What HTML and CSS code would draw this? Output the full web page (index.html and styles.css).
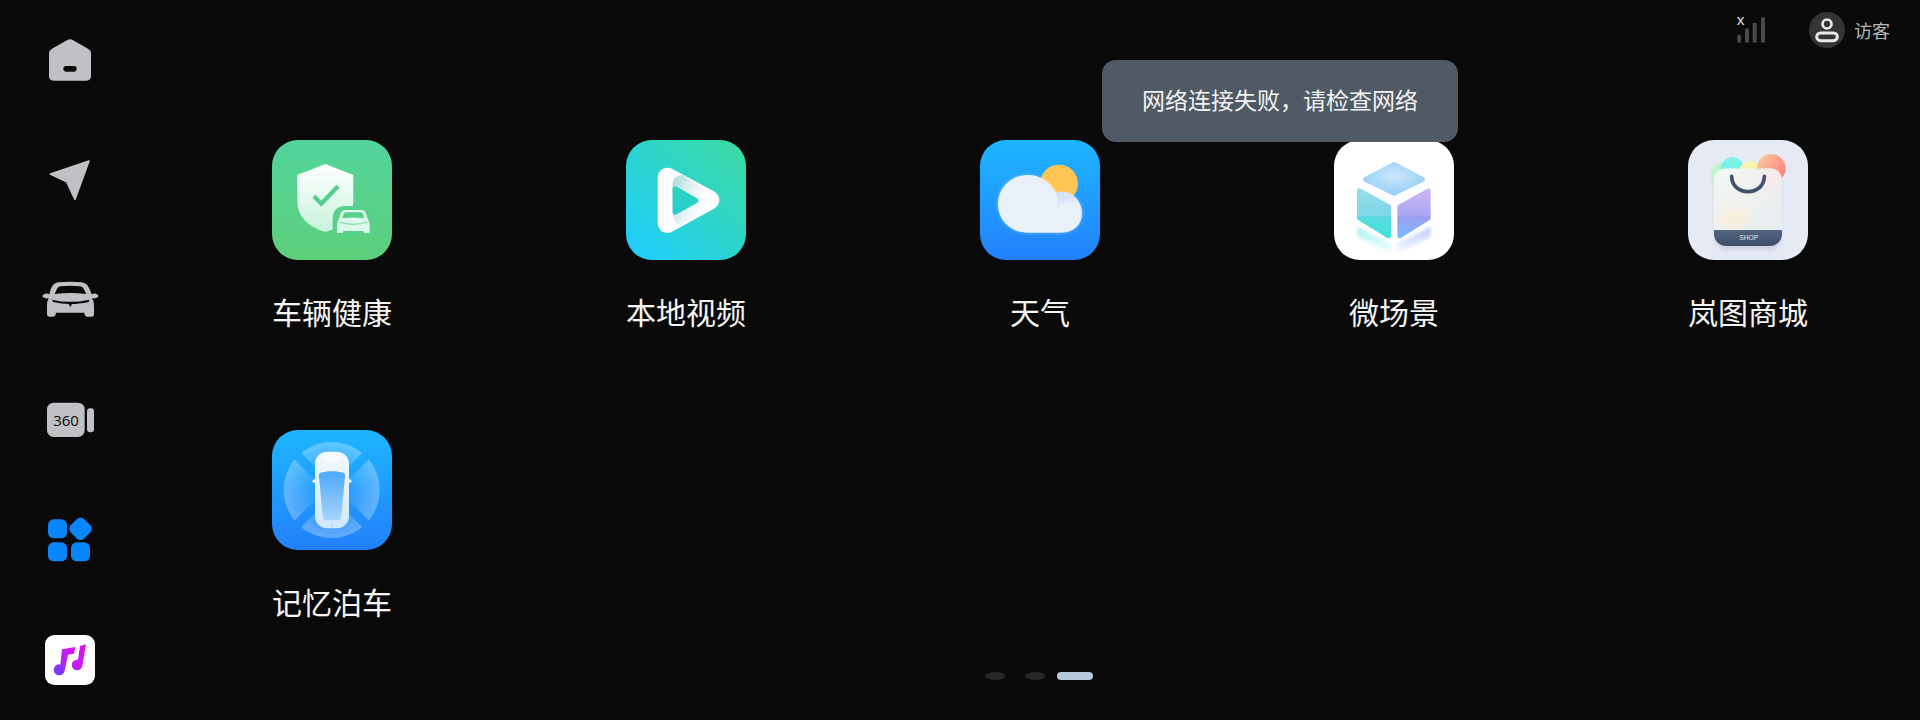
FILE: index.html
```html
<!DOCTYPE html>
<html lang="zh">
<head>
<meta charset="utf-8">
<title>应用</title>
<link rel="stylesheet" href="styles.css">
</head>
<body>
<div class="screen">
  <nav class="sidebar">
    <div class="nav-item"><svg class="nav-icon" viewBox="120 90 180 180"><path class="g" d="M202 120 Q210 115 218 120 L264 146 Q273 151 273 160 V228 Q273 242 259 242 H161 Q147 242 147 228 V160 Q147 151 156 146Z"/><rect class="k" x="190" y="198" width="40" height="17" rx="8.5"/></svg></div>
    <div class="nav-item"><svg class="nav-icon" viewBox="120 450 180 180"><path class="g gr" d="M267 483 L151 522 L200 545 L225 598Z"/></svg></div>
    <div class="nav-item"><svg class="nav-icon" viewBox="120 810 180 180"><path class="g" d="M175 847 Q210 843 245 847 Q262 849 269 868 L275 883 Q285 878 293 884 Q298 888 293 892 Q285 897 276 894 Q283 905 282 920 V942 Q282 950 274 950 H262 Q254 950 253 938 H168 Q167 950 159 950 H149 Q141 950 141 942 V920 Q140 905 146 894 Q137 897 130 892 Q124 888 130 884 Q138 878 148 883 L152 868 Q159 849 175 847Z"/><path class="k" d="M164 882 L171 866 Q174 860 182 859 Q210 856 240 859 Q248 860 251 866 L259 882 Q210 876 164 882Z"/><path class="k" d="M156 899 Q210 912 268 899 L266 906 Q235 912 216 912 L211 921 L206 912 Q185 912 159 906Z"/></svg></div>
    <div class="nav-item"><svg class="nav-icon" viewBox="120 90 180 180"><rect class="g" x="141" y="128" width="113" height="103" rx="20"/><rect class="g" x="261" y="145" width="21" height="72" rx="9"/><text class="cam-text" x="198" y="197" text-anchor="middle">360</text></svg></div>
    <div class="nav-item"><svg class="nav-icon" viewBox="120 450 180 180"><rect class="b" x="144" y="478" width="57" height="57" rx="17"/><rect class="b" x="144" y="547" width="57" height="57" rx="17"/><rect class="b" x="213" y="547" width="57" height="57" rx="17"/><rect class="b" x="213" y="478" width="57" height="57" rx="16" transform="rotate(45 241.500 506.500)"/></svg></div>
    <div class="nav-item"><svg class="nav-icon" viewBox="120 810 180 180"><defs><linearGradient id="mu" gradientUnits="userSpaceOnUse" x1="165" y1="945" x2="255" y2="860"><stop offset="0" stop-color="#6b3ffb"/><stop offset=".55" stop-color="#c81cf5"/><stop offset="1" stop-color="#e30ff0"/></linearGradient></defs><rect fill="#fff" x="135" y="825" width="150" height="150" rx="28"/><path fill="url(#mu)" d="M186 868 L226 861 L222 881 L204 884 L194 932 A16.500 16.500 0 1 1 178 913 Q180 913 181 914Z"/><path fill="url(#mu)" d="M240 858 L258 853 L247 918 A16 16 0 1 1 231 899 Q233 899 234 900Z"/></svg></div>
  </nav>

  <main class="main">
    <header class="topbar">
      <svg class="signal" viewBox="75 30 96 108"><rect class="bar" x="82" y="105" width="11" height="23" rx="4"/><rect class="bar" x="105" y="85" width="12" height="43" rx="4"/><rect class="bar" x="128" y="68" width="12" height="60" rx="4"/><rect class="bar" x="153" y="52" width="12" height="76" rx="4"/><text class="signal-x" x="92" y="75" text-anchor="middle">x</text></svg>
      <div class="user">
        <svg class="avatar" viewBox="297 36 108 108"><circle cx="351" cy="90" r="54" fill="#343436"/><circle cx="351" cy="72" r="13.500" fill="none" stroke="#e8e8e8" stroke-width="8"/><rect x="320" y="99" width="62" height="23" rx="11.500" fill="none" stroke="#e8e8e8" stroke-width="9"/></svg>
        <span class="user-name">访客</span>
      </div>
    </header>

    <section class="apps">
      <div class="app">
        <svg class="app-icon" viewBox="68 60 360 360">
          <defs>
            <linearGradient id="a1" x1="0" y1="0" x2="0" y2="1"><stop offset="0" stop-color="#52d49c"/><stop offset="1" stop-color="#5dcf7b"/></linearGradient>
            <linearGradient id="a1s" x1="0" y1="0" x2="0" y2="1"><stop offset="0" stop-color="#ffffff"/><stop offset="1" stop-color="#c8f3dd"/></linearGradient>
          </defs>
          <rect fill="url(#a1)" x="68" y="60" width="360" height="360" rx="78"/>
          <path fill="url(#a1s)" d="M228 132 L312 165 V245 Q310 310 228 336 Q145 310 144 245 V165Z"/>
          <path fill="none" stroke="#52cf8e" stroke-width="13" d="M194 229 L216 251 L266 199"/>
          <path fill="#57d18a" d="M250 345 V295 Q252 258 290 258 H330 Q368 258 371 295 V345Z"/>
          <path fill="#dcf8ea" d="M285 270 H338 Q348 271 351 283 L355 296 Q361 304 361 318 V339 H344 L342 333 H282 L280 339 H263 V318 Q263 304 269 296 L273 283 Q276 271 285 270Z"/>
          <path fill="#57d18a" d="M279 295 L283 282 Q285 277 291 277 H333 Q339 277 341 282 L345 295 Q312 290 279 295Z"/>
          <path fill="none" stroke="#57d18a" stroke-width="2.500" d="M270 306 Q312 320 354 306"/>
        </svg>
        <span class="app-name">车辆健康</span>
      </div>
      <div class="app">
        <svg class="app-icon" viewBox="48 60 360 360">
          <defs>
            <linearGradient id="a2" x1="1" y1="0" x2="0" y2="1"><stop offset="0" stop-color="#3cdc9f"/><stop offset="1" stop-color="#1dcdff"/></linearGradient>
            <linearGradient id="a2r" x1="0" y1="0" x2="1" y2=".5"><stop offset="0" stop-color="#a8d8dd"/><stop offset=".6" stop-color="#e8f3f4"/><stop offset="1" stop-color="#ffffff"/></linearGradient>
            <linearGradient id="a2i" x1="0" y1="0" x2="0" y2="1"><stop offset="0" stop-color="#2bd2bd"/><stop offset="1" stop-color="#25d0cc"/></linearGradient>
          </defs>
          <rect fill="url(#a2)" x="48" y="60" width="360" height="360" rx="78"/>
          <path fill="#fff" stroke="#fff" stroke-width="58" stroke-linejoin="round" d="M172 172 V310 L299 240Z"/>
          <path fill="url(#a2r)" d="M187 195 Q190 165 218 165 L280 205 Q292 225 288 252 Q284 275 262 284 L210 316 Q190 308 187 280Z"/>
          <path fill="url(#a2i)" stroke="url(#a2i)" stroke-width="16" stroke-linejoin="round" d="M196 207 V276 L257 242Z"/>
        </svg>
        <span class="app-name">本地视频</span>
      </div>
      <div class="app">
        <svg class="app-icon" viewBox="60 60 360 360">
          <defs>
            <linearGradient id="a3" x1="0" y1="0" x2="0" y2="1"><stop offset="0" stop-color="#1db6ff"/><stop offset="1" stop-color="#2280fb"/></linearGradient>
            <linearGradient id="a3n" x1="0" y1="0" x2="1" y2="1"><stop offset="0" stop-color="#cfdff5"/><stop offset="1" stop-color="#e8f0fa"/></linearGradient>
            <filter id="a3b" x="-20%" y="-20%" width="140%" height="140%"><feGaussianBlur stdDeviation="6"/></filter>
          </defs>
          <rect fill="url(#a3)" x="60" y="60" width="360" height="360" rx="78"/>
          <circle fill="#ffc552" cx="297" cy="191" r="57"/>
          <path fill="#fff" opacity=".35" filter="url(#a3b)" d="M205 165 C150 165 114 205 114 252 C114 300 150 338 205 338 H305 C340 338 366 315 366 280 C366 245 340 220 305 220 Q298 220 288 222 C270 185 240 165 205 165Z"/>
          <path fill="#e8f0fa" d="M205 165 C150 165 114 205 114 252 C114 300 150 338 205 338 H305 C340 338 366 315 366 280 C366 245 340 215 305 215 Q298 215 288 218 C270 185 240 165 205 165Z"/>
          <path fill="url(#a3n)" d="M288 218 Q298 215 305 215 Q340 215 358 250 Q320 235 293 262 Q296 240 288 218Z"/>
        </svg>
        <span class="app-name">天气</span>
      </div>
      <div class="app">
        <svg class="app-icon" viewBox="42 30 360 360">
          <defs>
            <radialGradient id="a4t" cx=".5" cy=".4" r=".6"><stop offset="0" stop-color="#cae6fb"/><stop offset="1" stop-color="#98d1f8"/></radialGradient>
            <linearGradient id="a4l" x1="0" y1="0" x2="0" y2="1"><stop offset="0" stop-color="#94dcea"/><stop offset=".55" stop-color="#7cd9e6"/><stop offset=".56" stop-color="#5dd9e2"/><stop offset="1" stop-color="#44e3da"/></linearGradient>
            <linearGradient id="a4r" x1="0" y1="0" x2="0" y2="1"><stop offset="0" stop-color="#ccb6f3"/><stop offset=".55" stop-color="#a9a7f2"/><stop offset=".56" stop-color="#9c9ff0"/><stop offset="1" stop-color="#7db6f9"/></linearGradient>
            <linearGradient id="a4c" x1="0" y1="0" x2="0" y2="1"><stop offset="0" stop-color="#a8f0f4"/><stop offset="1" stop-color="#ffffff"/></linearGradient>
            <linearGradient id="a4d" x1="0" y1="0" x2="0" y2="1"><stop offset="0" stop-color="#bcccff"/><stop offset="1" stop-color="#ffffff"/></linearGradient>
            <filter id="a4b" x="-20%" y="-20%" width="140%" height="140%"><feGaussianBlur stdDeviation="5"/></filter>
          </defs>
          <rect fill="#fff" x="42" y="30" width="360" height="360" rx="78"/>
          <path fill="url(#a4c)" filter="url(#a4b)" d="M112 290 L212 340 V375 L112 320Z"/>
          <path fill="url(#a4d)" filter="url(#a4b)" d="M332 290 L232 340 V375 L332 320Z"/>
          <path fill="url(#a4t)" stroke="url(#a4t)" stroke-width="14" stroke-linejoin="round" d="M222 103 L308 148 L222 190 L136 148Z"/>
          <path fill="url(#a4l)" stroke="url(#a4l)" stroke-width="14" stroke-linejoin="round" d="M118 182 L206 230 V318 L118 264Z"/>
          <path fill="url(#a4r)" stroke="url(#a4r)" stroke-width="14" stroke-linejoin="round" d="M325 182 L239 230 V318 L325 264Z"/>
        </svg>
        <span class="app-name">微场景</span>
      </div>
      <div class="app">
        <svg class="app-icon" viewBox="54 30 360 360">
          <defs>
            <linearGradient id="a5o" x1="0" y1="0" x2="1" y2=".6"><stop offset="0" stop-color="#fdd09c"/><stop offset="1" stop-color="#ff8583"/></linearGradient>
            <linearGradient id="a5b" x1="0" y1="0" x2="1" y2="1"><stop offset="0" stop-color="#f3f8f6"/><stop offset=".45" stop-color="#eff0ee"/><stop offset="1" stop-color="#e2edf2"/></linearGradient>
            <linearGradient id="a5d" x1="0" y1="0" x2="0" y2="1"><stop offset="0" stop-color="#54637f"/><stop offset="1" stop-color="#3e4d68"/></linearGradient>
            <radialGradient id="a5y" cx=".5" cy=".5" r=".5"><stop offset="0" stop-color="#f9ecd8"/><stop offset="1" stop-color="#f9ecd8" stop-opacity="0"/></radialGradient>
            <radialGradient id="a5p" cx=".5" cy=".5" r=".5"><stop offset="0" stop-color="#f8e9ea"/><stop offset="1" stop-color="#f8e9ea" stop-opacity="0"/></radialGradient>
            <filter id="a5s" x="-20%" y="-20%" width="140%" height="140%"><feGaussianBlur stdDeviation="8"/></filter>
            <clipPath id="a5c"><rect x="132" y="115" width="204" height="233" rx="36"/></clipPath>
          </defs>
          <rect fill="#e6eaf4" x="54" y="30" width="360" height="360" rx="78"/>
          <circle fill="#c5f6cb" cx="158" cy="135" r="37"/>
          <circle fill="#7bf0e7" cx="187" cy="118" r="36"/>
          <circle fill="#fbf3b0" cx="241" cy="130" r="36"/>
          <circle fill="url(#a5o)" cx="304" cy="115" r="43"/>
          <rect fill="#aeb9d4" opacity=".5" filter="url(#a5s)" x="136" y="125" width="196" height="235" rx="36"/>
          <g clip-path="url(#a5c)">
            <rect fill="url(#a5b)" x="132" y="115" width="204" height="233"/>
            <ellipse fill="url(#a5y)" cx="190" cy="265" rx="70" ry="45"/>
            <ellipse fill="url(#a5p)" cx="300" cy="150" rx="50" ry="50"/>
            <rect fill="url(#a5d)" x="132" y="300" width="204" height="48"/>
          </g>
          <path fill="none" stroke="#43516c" stroke-width="11" stroke-linecap="round" d="M185 139 C185 200 283 200 283 139"/>
          <text class="shop" x="236" y="329" text-anchor="middle">SHOP</text>
        </svg>
        <span class="app-name">岚图商城</span>
      </div>
      <div class="app">
        <svg class="app-icon" viewBox="66 30 360 360">
          <defs>
            <linearGradient id="a6" x1="0" y1="0" x2="0" y2="1"><stop offset="0" stop-color="#1db6ff"/><stop offset="1" stop-color="#2280fb"/></linearGradient>
            <radialGradient id="a6r" gradientUnits="userSpaceOnUse" cx="245" cy="210" r="144"><stop offset=".4" stop-color="#fff" stop-opacity=".05"/><stop offset="1" stop-color="#fff" stop-opacity=".3"/></radialGradient>
            <linearGradient id="a6c" x1="0" y1="0" x2="0" y2="1"><stop offset="0" stop-color="#4ea9fb"/><stop offset="1" stop-color="#a8d3fb"/></linearGradient>
            <linearGradient id="a6w" x1="0" y1="0" x2="0" y2="1"><stop offset="0" stop-color="#f2f9ff"/><stop offset="1" stop-color="#cfe8fd"/></linearGradient>
            <mask id="a6m"><rect fill="#fff" x="66" y="30" width="360" height="360"/><path stroke="#000" stroke-width="28" d="M125 90 L365 330 M365 90 L125 330"/></mask>
          </defs>
          <rect fill="url(#a6)" x="66" y="30" width="360" height="360" rx="78"/>
          <circle fill="url(#a6r)" mask="url(#a6m)" cx="245" cy="210" r="144"/>
          <path fill="#e2f2ff" d="M204 168 L186 183 Q186 189 194 188 H204Z M288 168 L306 183 Q306 189 298 188 H288Z"/>
          <rect fill="url(#a6w)" x="195" y="95" width="102" height="230" rx="36"/>
          <path fill="url(#a6c)" d="M212 158 Q246 150 280 158 Q287 160 285 170 L274 287 Q273 300 262 301 H230 Q219 300 218 287 L207 170 Q205 160 212 158Z"/>
          <path fill="#fff" opacity=".55" d="M226 101 H266 L272 128 Q246 122 220 128Z"/>
          <path fill="none" stroke="#9fcdfa" stroke-width="2" d="M246 308 V324"/>
        </svg>
        <span class="app-name">记忆泊车</span>
      </div>
    </section>

    <div class="pager">
      <span class="dot"></span>
      <span class="dot"></span>
      <span class="dot dot-active"></span>
    </div>
  </main>

  <div class="toast">网络连接失败，请检查网络</div>
</div>
</body>
</html>
```
FILE: styles.css
```css
* { box-sizing: border-box; }

html, body {
  margin: 0;
  padding: 0;
  background: #0a0a0b;
}

.screen {
  position: relative;
  display: flex;
  width: 1920px;
  height: 720px;
  overflow: hidden;
  background: #0a0a0b;
  font-family: "Noto Sans CJK SC", "Noto Sans", sans-serif;
}

.sidebar {
  flex: 0 0 140px;
  display: flex;
  flex-direction: column;
}

.nav-item {
  flex: 0 0 120px;
  display: flex;
  align-items: center;
  justify-content: center;
}

.nav-icon {
  display: block;
  width: 60px;
  height: 60px;
}

.g { fill: #c0c1c5; }
.gr { stroke: #c0c1c5; stroke-width: 5; stroke-linejoin: round; }
.k { fill: #0a0a0b; }
.b { fill: #0a86fb; }

.cam-text {
  font-family: "Open Sans", sans-serif;
  font-size: 45px;
  font-weight: 500;
  fill: #0a0a0b;
}

.main {
  flex: 1;
  display: flex;
  flex-direction: column;
}

.topbar {
  flex: 0 0 60px;
  display: flex;
  align-items: center;
  justify-content: flex-end;
  padding-right: 30px;
  gap: 42px;
}

.signal {
  display: block;
  width: 32px;
  height: 36px;
  margin-bottom: 4px;
}

.bar { fill: #4a4a4c; }

.signal-x {
  font-family: "Liberation Sans", sans-serif;
  font-size: 46px;
  fill: #e0e0e0;
}

.user {
  display: flex;
  align-items: center;
  gap: 9px;
}

.avatar {
  display: block;
  width: 36px;
  height: 36px;
}

.user-name {
  font-size: 18px;
  line-height: 24px;
  color: #b9b9b9;
}

.apps {
  display: grid;
  grid-template-columns: repeat(5, 120px);
  column-gap: 234px;
  row-gap: 99px;
  padding: 80px 0 0 132px;
}

.app {
  display: flex;
  flex-direction: column;
  align-items: center;
  gap: 31px;
}

.app-icon {
  display: block;
  width: 120px;
  height: 120px;
}

.app-name {
  font-size: 30px;
  line-height: 40px;
  color: #f5f5f5;
  white-space: nowrap;
}

.shop {
  font-family: "Liberation Sans", sans-serif;
  font-size: 20px;
  fill: #e6e9ef;
}

.pager {
  display: flex;
  gap: 20px;
  margin-top: 51px;
  padding-left: 845px;
}

.dot {
  width: 20px;
  height: 8px;
  border-radius: 50%;
  background: #262728;
}

.dot-active {
  width: 36px;
  margin-left: -8px;
  border-radius: 4px;
  background: #b6c8dc;
}

.toast {
  position: absolute;
  left: 1102px;
  top: 60px;
  width: 356px;
  height: 82px;
  display: flex;
  align-items: center;
  justify-content: center;
  padding-bottom: 4px;
  border-radius: 14px;
  background: #505a64;
  color: #f2f2f2;
  font-size: 23px;
}
```
